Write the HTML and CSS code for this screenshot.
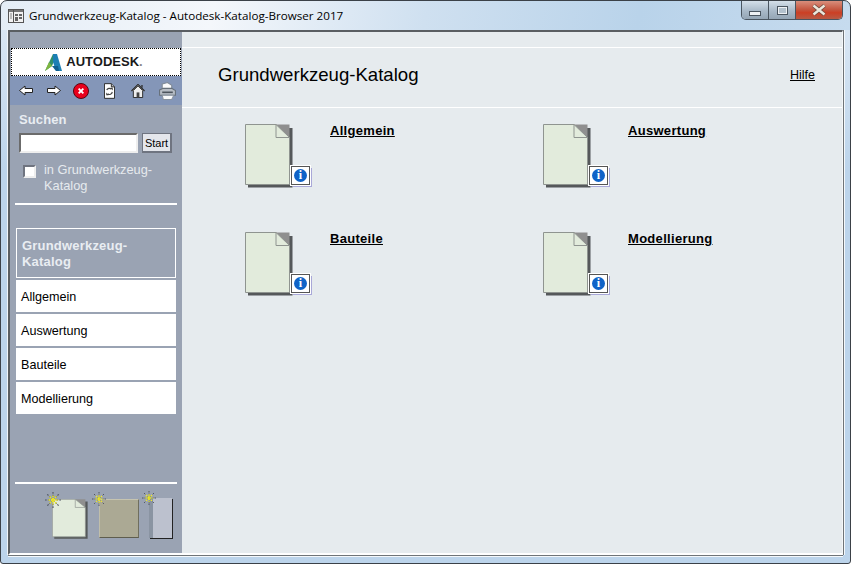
FILE: index.html
```html
<!DOCTYPE html>
<html lang="de">
<head>
<meta charset="utf-8">
<title>Grundwerkzeug-Katalog - Autodesk-Katalog-Browser 2017</title>
<link rel="stylesheet" href="styles.css">
</head>
<body>
<svg class="defs" width="0" height="0" aria-hidden="true">
  <defs>
    <filter id="soft" x="-10%" y="-10%" width="120%" height="120%"><feGaussianBlur stdDeviation=".5"/></filter>
    <symbol id="doc" viewBox="0 0 48 64" preserveAspectRatio="none">
      <path d="M3 4H47.500V63.500H3Z" fill="#55585a" filter="url(#soft)"/>
      <path d="M.5.5H31L44.500 14V60.500H.5Z" fill="#e2ebdc" stroke="#8f9490"/>
      <path d="M31 .5H44.500V14Z" fill="#8f8f8f"/>
      <path d="M31 .5V13.500H44.500Z" fill="#e2ebdc" stroke="#8f9490"/>
    </symbol>
    <symbol id="spark" viewBox="0 0 14 14">
      <path d="M7 0V14M0 7H14M2 2L12 12M12 2L2 12" stroke="#4f5460" stroke-width="1" stroke-dasharray="1.500 1"/>
      <path d="M7 3V11M3 7H11M4 4L10 10M10 4L4 10" stroke="#f4ee20" stroke-width="1.200" stroke-dasharray="1.500 .8"/>
    </symbol>
  </defs>
</svg>
<div class="window">
  <header class="titlebar">
    <svg class="appicon" width="16" height="16" viewBox="0 0 16 16">
      <rect x=".5" y="1.500" width="15" height="13" fill="#f2f2f2" stroke="#555"/>
      <path d="M1 2H15V4H1Z" fill="#777"/>
      <path d="M5.500 2V14" stroke="#555"/>
      <path d="M7 6H10V8H7ZM11 6H14V8H11ZM7 9H10V13H7ZM11 9H14V11H11Z" fill="#666"/>
      <path d="M2 6H4M2 8H4M2 10H4" stroke="#888"/>
    </svg>
    <span class="wintitle">Grundwerkzeug-Katalog - Autodesk-Katalog-Browser 2017</span>
    <div class="controls">
      <div class="ctl ctl-min"><span class="min-glyph"></span></div>
      <div class="ctl ctl-max"><span class="max-glyph"></span></div>
      <div class="ctl ctl-close">
        <svg width="18" height="12" viewBox="0 0 18 12"><path d="M3.500 1.500L14.500 10.500M14.500 1.500L3.500 10.500" stroke="#6e4a40" stroke-width="4"/><path d="M3.500 1.500L14.500 10.500M14.500 1.500L3.500 10.500" stroke="#ece8dc" stroke-width="2.400"/></svg>
      </div>
    </div>
  </header>
  <div class="frame">
    <aside class="sidebar">
      <div class="logo">
        <svg width="17" height="17" viewBox="0 0 17 17">
          <path d="M0 17L8 0H12L7 12Z" fill="#2f8f6a"/>
          <path d="M0 17L4 8L7 12Z" fill="#7fb640"/>
          <path d="M8 0H12L17 17H11L8 8Z" fill="#1c7fb4"/>
          <path d="M7 12H13L14 17H11Z" fill="#0f5f8f"/>
        </svg>
        <span class="logotext">AUTODESK<span class="logodot">.</span></span>
      </div>
      <nav class="toolbar">
        <svg class="tool" width="14" height="11" viewBox="0 0 14 11"><path d="M.5 5.500L6 1V3.500H13.500V7.500H6V10Z" fill="#fff" stroke="#222"/></svg>
        <svg class="tool" width="14" height="11" viewBox="0 0 14 11"><path d="M13.500 5.500L8 1V3.500H.5V7.500H8V10Z" fill="#fff" stroke="#222"/></svg>
        <svg class="tool" width="16" height="16" viewBox="0 0 17 17"><circle cx="8.500" cy="8.500" r="8" fill="#e8001c" stroke="#50000a"/><path d="M6 6L11 11M11 6L6 11" stroke="#fff" stroke-width="2"/></svg>
        <svg class="tool" width="11" height="16" viewBox="0 0 12 17"><path d="M.5.5H8L11.500 4V16.500H.5Z" fill="#fff" stroke="#222"/><path d="M8 .5V4H11.500" fill="#bbb" stroke="#222"/><path d="M3 7.500A3 3 0 0 1 8 6.500M9 9.500A3 3 0 0 1 4 11.500" fill="none" stroke="#444" stroke-width="1.300"/><path d="M7 5H9.500V8ZM5 13H2.500V10Z" fill="#333"/></svg>
        <svg class="tool" width="14" height="14" viewBox="0 0 15 15"><path d="M.5 7.500L7.500 .5L14.500 7.500" fill="#ddd" stroke="#222" stroke-width="1.200"/><path d="M2.500 7V14.500H12.500V7L7.500 2Z" fill="#eee" stroke="#222"/><path d="M6 9H9V14.500H6Z" fill="#444"/><path d="M11 1H12.500V4H11Z" fill="#333"/></svg>
        <svg class="tool" width="17" height="18" viewBox="0 0 16 17"><path d="M3 2L8 .5L12 3V7H3Z" fill="#fafbfc" stroke="#7f8a96"/><path d="M.5 7.500L4 6H12L15.500 8V12.500H.5Z" fill="#b6bcc4" stroke="#66707a"/><path d="M3 12.500H14L12 16.500H4Z" fill="#fafbfc" stroke="#8a94a0"/><path d="M3 9H13V10.500H3Z" fill="#4c545c"/></svg>
      </nav>
      <section class="search">
        <div class="search-head">Suchen</div>
        <div class="search-row">
          <input class="search-input" type="text" aria-label="Suchen">
          <button class="search-btn" type="button">Start</button>
        </div>
        <label class="scope">
          <span class="scope-check"></span>
          <span class="scope-text">in Grundwerkzeug-<br>Katalog</span>
        </label>
      </section>
      <hr class="rule">
      <ul class="tree">
        <li class="tree-active">Grundwerkzeug-<br>Katalog</li>
        <li class="tree-item">Allgemein</li>
        <li class="tree-item">Auswertung</li>
        <li class="tree-item">Bauteile</li>
        <li class="tree-item">Modellierung</li>
      </ul>
      <hr class="rule">
      <div class="palette">
        <div class="pal pal-doc">
          <svg class="pal-shape" width="36" height="40"><use href="#doc"/></svg>
          <svg class="sparkle" width="16" height="16"><use href="#spark"/></svg>
        </div>
        <div class="pal pal-olive">
          <div class="olive"></div>
          <svg class="sparkle" width="14" height="14"><use href="#spark"/></svg>
        </div>
        <div class="pal pal-slate">
          <div class="slate"></div>
          <svg class="sparkle" width="14" height="14"><use href="#spark"/></svg>
        </div>
      </div>
    </aside>
    <main class="main">
      <div class="main-head">
        <h1 class="main-title">Grundwerkzeug-Katalog</h1>
        <a class="help" href="#">Hilfe</a>
      </div>
      <div class="cards">
        <article class="card">
          <div class="docwrap">
            <svg width="48" height="64"><use href="#doc"/></svg>
            <div class="info"><span class="info-dot">i</span></div>
          </div>
          <a class="card-link" href="#">Allgemein</a>
        </article>
        <article class="card">
          <div class="docwrap">
            <svg width="48" height="64"><use href="#doc"/></svg>
            <div class="info"><span class="info-dot">i</span></div>
          </div>
          <a class="card-link" href="#">Auswertung</a>
        </article>
        <article class="card">
          <div class="docwrap">
            <svg width="48" height="64"><use href="#doc"/></svg>
            <div class="info"><span class="info-dot">i</span></div>
          </div>
          <a class="card-link" href="#">Bauteile</a>
        </article>
        <article class="card">
          <div class="docwrap">
            <svg width="48" height="64"><use href="#doc"/></svg>
            <div class="info"><span class="info-dot">i</span></div>
          </div>
          <a class="card-link" href="#">Modellierung</a>
        </article>
      </div>
    </main>
  </div>
</div>
</body>
</html>
```
FILE: styles.css
```css
* { box-sizing: border-box; }
html, body { margin: 0; padding: 0; width: 851px; height: 564px; overflow: hidden; background: #fff; }
body { font-family: "Liberation Sans", Arial, sans-serif; color: #000; }
.defs { display: block; height: 0; }

.window {
  width: 851px; height: 564px;
  display: flex; flex-direction: column;
  background:
    linear-gradient(100deg, #e4edf6 0, #f4f7fb 25%, #cfe0f0 50%, #b9d3ea 75%, #c6dbee 100%) top / 100% 29px no-repeat,
    linear-gradient(#dfeaf5, #bcd4eb 30%);
  border: 1px solid #3b4148;
  border-radius: 7px 7px 3px 3px;
  padding: 0 7px 8px;
}
.titlebar { height: 29px; flex: none; display: flex; align-items: flex-start; }
.appicon { margin: 7px 0 0 0; flex: none; }
.wintitle { margin: 8px 0 0 5px; font-family: "Open Sans", sans-serif; font-size: 11.650px; line-height: 14px; white-space: nowrap; color: #000; }
.controls { margin-left: auto; display: flex; flex: none; height: 19px; border: 1px solid #4a5560; border-top: 0; border-radius: 0 0 5px 5px; overflow: hidden; }
.ctl { height: 18px; flex: none; display: flex; align-items: center; justify-content: center; }
.ctl-min { width: 27px; background: linear-gradient(#d4dfe9, #a9b9c8 55%, #94a5b5); border-right: 1px solid #4a5560; }
.ctl-max { width: 27px; background: linear-gradient(#d4dfe9, #a9b9c8 55%, #94a5b5); border-right: 1px solid #4a5560; }
.ctl-close { width: 46px; background: linear-gradient(#d98e7c, #c4533c 50%, #cc3f24 65%, #b85a44); }
.min-glyph { width: 12px; height: 5px; margin-top: 6px; background: #eef1f4; border: 1px solid #4a5560; }
.max-glyph { width: 11px; height: 9px; border: 1px solid #4a5560; background: #b4c2ce; box-shadow: inset 0 0 0 1px #eef1f4; }

.frame {
  flex: 1; min-height: 0; display: flex;
  border-top: 2px solid #5a5e62; border-left: 2px solid #5a5e62;
  border-right: 1px solid #f4f7f9; border-bottom: 2px solid #fff;
  background: #e6ebee;
  box-shadow: -1px 0 0 #f0f4f8, 1px 0 0 #6f7478, 2px 0 0 #f4f8fb, 0 1px 0 #6f7478, 0 2px 0 #f4f8fb;
}

.sidebar { width: 172px; flex: none; background: #9aa3b3; padding-top: 16px; display: flex; flex-direction: column; }
.logo {
  height: 28px; flex: none; margin: 0 1px; background: #fff; border: 1px dotted #000;
  display: flex; align-items: center; justify-content: center; gap: 4px; padding-right: 4px;
}
.logotext { font-size: 13px; font-weight: bold; color: #1a1a1a; line-height: 14px; }
.logodot { color: #888; }
.toolbar { height: 29px; flex: none; background: #8496b8; display: flex; align-items: center; padding-left: 9px; }
.tool { flex: none; }
.toolbar .tool:nth-child(2) { margin-left: 14px; }
.toolbar .tool:nth-child(3) { margin-left: 12px; }
.toolbar .tool:nth-child(4) { margin-left: 15px; }
.toolbar .tool:nth-child(5) { margin-left: 16px; }
.toolbar .tool:nth-child(6) { margin-left: 14px; }

.search { padding: 7px 0 0 9px; height: 98px; flex: none; }
.search-head { font-size: 13px; font-weight: bold; line-height: 16px; color: #e9edf2; letter-spacing: .1px; }
.search-row { display: flex; margin-top: 5px; gap: 4px; }
.search-input { width: 119px; height: 20px; margin: 0; padding: 0; background: #fff; border: 2px solid; border-color: #6b6b6b #eee #eee #6b6b6b; border-radius: 0; outline: 0; }
.search-btn { width: 30px; height: 20px; padding: 0; margin: 0; background: #e4e6ec; border: 1px solid #6f7480; border-right-width: 2px; border-bottom-width: 2px; font: 11px/16px "Liberation Sans", Arial, sans-serif; color: #000; }
.scope { display: flex; margin-top: 9px; padding-left: 4px; }
.scope-check { width: 13px; height: 13px; margin-top: 3px; flex: none; background: #fff; border: 2px solid; border-color: #6f7480 #eee #eee #6f7480; }
.scope-text { margin-left: 8px; font-size: 12.800px; line-height: 16px; color: #e6eaee; }

.rule { border: 0; height: 2px; background: #fff; margin: 0 5px; flex: none; }
.tree { list-style: none; margin: 23px 6px 0; padding: 0; flex: 1; display: flex; flex-direction: column; gap: 2px; }
.tree-active { height: 50px; border: 1px solid #fff; padding: 9px 0 0 5px; font-size: 13px; font-weight: bold; letter-spacing: .2px; line-height: 16px; color: #e9edf2; }
.tree-item { height: 32px; background: #fff; padding-left: 5px; font-size: 12.600px; line-height: 34px; color: #000; }

.palette { height: 69px; flex: none; display: flex; padding: 15px 0 0 42px; }
.pal { position: relative; flex: none; }
.pal-doc { width: 36px; }
.pal-olive { margin-left: 11px; }
.pal-slate { margin-left: 10px; margin-top: -1px; }
.pal-shape { display: block; }
.olive { width: 40px; height: 39px; background: #aba994; border: 1px solid; border-color: #c6c4b0 #6f6e5e #5e5d4e #c0beaa; }
.slate { width: 23px; height: 40px; background: linear-gradient(90deg, #8a94a2 4px, #bcc1ce 4px); box-shadow: 1px 1px 0 #222; }
.sparkle { position: absolute; left: -7px; top: -7px; }

.main { flex: 1; min-width: 0; display: flex; flex-direction: column; }
.main-head {
  margin-top: 15px; height: 61px; flex: none;
  border-top: 1px solid #fff; border-bottom: 1px solid #fff;
  display: flex; justify-content: space-between; align-items: center;
  padding: 0 27px 6px 36px;
}
.main-title { margin: 0; font-size: 18.600px; font-weight: normal; line-height: 24px; }
.help { font-size: 12.500px; color: #000; text-decoration: underline; }
.cards { display: grid; grid-template-columns: 298px 298px; grid-auto-rows: 108px; padding: 16px 0 0 63px; }
.card { display: flex; align-items: flex-start; }
.docwrap { position: relative; width: 85px; height: 64px; flex: none; }
.docwrap svg { display: block; }
.info { position: absolute; left: 46px; top: 42px; width: 19px; height: 19px; background: #fff; border: 1px solid #555; box-shadow: 0 0 0 1px #fff, 2px 2px 0 #a9a8d8; display: flex; align-items: center; justify-content: center; }
.info-dot { width: 13px; height: 13px; border-radius: 50%; background: #0f63c8; color: #fff; font: bold 12px/13px "Liberation Serif", serif; text-align: center; }
.card-link { font-size: 13px; font-weight: bold; letter-spacing: .3px; color: #000; text-decoration: underline; line-height: 14px; }
```
